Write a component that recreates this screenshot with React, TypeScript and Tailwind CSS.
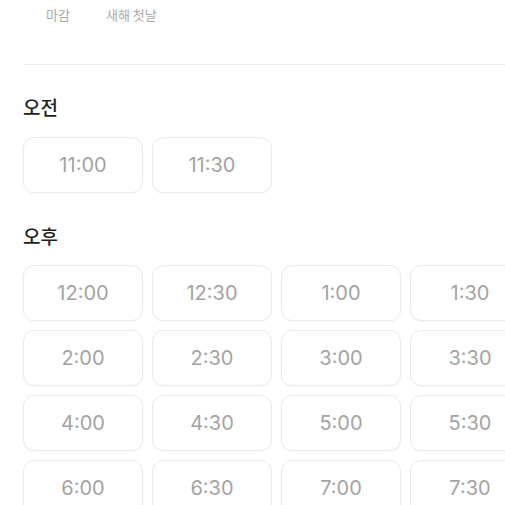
import React from "react";

const am = ["11:00", "11:30"];
const pm = ["12:00", "12:30", "1:00", "1:30", "2:00", "2:30", "3:00", "3:30", "4:00", "4:30", "5:00", "5:30", "6:00", "6:30", "7:00", "7:30"];

function Slot({ t }: { t: string }) {
  return (
    <div className="w-[120px] h-[56px] shrink-0 rounded-[11px] border border-[#ebebeb] bg-white flex items-center justify-center text-[20px] text-[#a3a3a3] font-['Inter','Noto_Sans_CJK_KR',sans-serif] shadow-[0_1px_2px_rgba(0,0,0,0.03)]">
      {t}
    </div>
  );
}

export default function App() {
  return (
    <div className="w-[505px] h-[505px] overflow-hidden bg-white font-['Noto_Sans_CJK_KR','Noto_Sans',sans-serif]">
      <div className="flex h-[30px] items-center pl-[46px] gap-[36px] text-[13px] text-[#a8a8a8]">
        <span>마감</span>
        <span>새해 첫날</span>
      </div>
      <div className="ml-[23px] mt-[34px] h-px bg-[#ececec]" />
      <div className="pl-[23px]">
        <div className="mt-[31px] h-[22px] flex items-center text-[19px] text-[#1e1e1e] font-medium">오전</div>
        <div className="mt-[19px] flex gap-[9px]">
          {am.map((t) => (
            <Slot key={t} t={t} />
          ))}
        </div>
        <div className="mt-[32px] h-[22px] flex items-center text-[19px] text-[#1e1e1e] font-medium">오후</div>
        <div className="mt-[18px] grid grid-cols-[repeat(4,120px)] gap-[9px] w-[600px]">
          {pm.map((t) => (
            <Slot key={t} t={t} />
          ))}
        </div>
      </div>
    </div>
  );
}
